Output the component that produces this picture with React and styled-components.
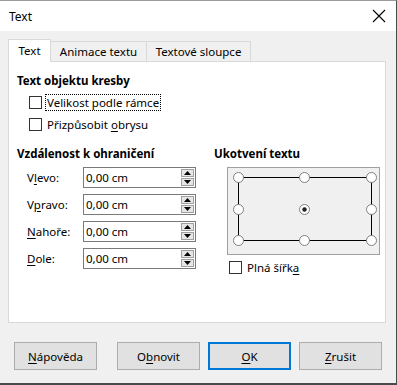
import React from "react";
import styled, { createGlobalStyle } from "styled-components";

const GlobalStyle = createGlobalStyle`
  html, body { margin: 0; padding: 0; background: #f0f0f0; }
  body { font-family: "Noto Sans", "Open Sans", sans-serif; font-size: 11.5px; color: #000; }
  * { box-sizing: border-box; }
`;

const Window = styled.div`
  width: 397px;
  height: 385px;
  display: flex;
  flex-direction: column;
  background: #f0f0f0;
  border-top: 1px solid #9a9a9a;
  border-right: 1px solid #4a4a4a;
  border-bottom: 2px solid #4a4a4a;
`;

const TitleBar = styled.div`
  height: 30px;
  background: #fff;
  display: flex;
  align-items: center;
  justify-content: space-between;
  padding: 0 10px 0 9px;
  font-size: 12px;
`;

const Body = styled.div`
  flex: 1;
  display: flex;
  flex-direction: column;
  padding: 8px 10px 0 8px;
`;

const TabRow = styled.div`
  display: flex;
  align-items: flex-end;
  height: 23px;
  position: relative;
  z-index: 1;
  margin-bottom: -1px;
`;

const Tab = styled.div`
  width: ${p => p.$w}px;
  height: ${p => (p.$active ? 23 : 21)}px;
  display: flex;
  align-items: center;
  justify-content: center;
  background: ${p => (p.$active ? "#fff" : "#f0f0f0")};
  border: 1px solid #d9d9d9;
  border-bottom: ${p => (p.$active ? "none" : "1px solid #d9d9d9")};
  margin-left: ${p => (p.$active ? 0 : -1)}px;
  padding-bottom: ${p => (p.$active ? 2 : 0)}px;
  &:first-child { margin-left: 0; }
`;

const Panel = styled.div`
  height: 262px;
  background: #fff;
  border: 1px solid #d9d9d9;
  padding: 11px 4px 0 8px;
`;

const Heading = styled.div`
  font-weight: bold;
  height: 16px;
  line-height: 16px;
`;

const CheckGroup = styled.div`
  display: flex;
  flex-direction: column;
  gap: 9px;
  padding: 7px 0 0 12px;
`;

const CheckRow = styled.label`
  display: flex;
  align-items: center;
  gap: 3px;
  height: 13px;
`;

const Box = styled.span`
  width: 13px;
  height: 13px;
  border: 1px solid #333;
  background: #fff;
  flex: none;
`;

const CheckLabel = styled.span`
  padding: 0 1px;
  line-height: 15px;
  border: 1px dotted ${p => (p.$focus ? "#000" : "transparent")};
`;

const Columns = styled.div`
  display: flex;
  margin-top: 15px;
`;

const LeftCol = styled.div`
  flex: none;
  width: 197px;
  display: flex;
  flex-direction: column;
`;

const RightCol = styled.div`
  flex: 1;
  display: flex;
  flex-direction: column;
`;

const FieldList = styled.div`
  display: flex;
  flex-direction: column;
  gap: 6px;
  padding: 5px 0 0 10px;
`;

const FieldRow = styled.div`
  display: flex;
  align-items: center;
  height: 21px;
`;

const FieldLabel = styled.span`
  width: 56px;
`;

const Input = styled.div`
  width: 113px;
  height: 21px;
  border: 1px solid #7a7a7a;
  background: #fff;
  display: flex;
  align-items: center;
  justify-content: space-between;
  padding: 0 1px 0 2px;
`;

const Spin = styled.div`
  display: flex;
  flex-direction: column;
  gap: 1px;
`;

const SpinBtn = styled.div`
  width: 13px;
  height: 8px;
  border: 1px solid #a0a0a0;
  background: #e6e6e6;
  display: flex;
  align-items: center;
  justify-content: center;
`;

const AnchorBox = styled.div`
  margin: 5px 0 0 13px;
  width: 153px;
  height: 88px;
  border: 1px solid #a0a0a0;
  background: #f0f0f0;
`;

const FullWidth = styled(CheckRow)`
  margin: 6px 0 0 15px;
`;

const Footer = styled.div`
  display: flex;
  align-items: center;
  padding: 19px 0 0 6px;
`;

const Button = styled.div`
  width: 83px;
  height: 28px;
  display: flex;
  align-items: center;
  justify-content: center;
  background: #e1e1e1;
  border: ${p => (p.$default ? "2px solid #0078d7" : "1px solid #adadad")};
  margin-left: ${p => p.$ml || 0}px;
`;

const U = styled.span`
  text-decoration: underline;
  text-underline-offset: 2px;
`;

const Up = () => (
  <svg width="7" height="4" viewBox="0 0 7 4"><path d="M0 4 L3.5 0 L7 4 Z" fill="#000" /></svg>
);
const Down = () => (
  <svg width="7" height="4" viewBox="0 0 7 4"><path d="M0 0 L3.5 4 L7 0 Z" fill="#000" /></svg>
);

const SpinField = ({ label }) => (
  <FieldRow>
    <FieldLabel>{label}</FieldLabel>
    <Input>
      <span>0,00 cm</span>
      <Spin>
        <SpinBtn><Up /></SpinBtn>
        <SpinBtn><Down /></SpinBtn>
      </Spin>
    </Input>
  </FieldRow>
);

const Radio = ({ cx, cy, on }) => (
  <g>
    <circle cx={cx} cy={cy} r="5" fill="#fff" stroke="#7f7f7f" strokeWidth="1" />
    {on && <circle cx={cx} cy={cy} r="2.2" fill="#222" />}
  </g>
);

const Anchor = () => {
  const xs = [10, 76, 143];
  const ys = [9, 41, 72];
  return (
    <svg width="151" height="86" viewBox="0 0 151 86">
      <rect x="10.5" y="9.5" width="133" height="63" fill="none" stroke="#000" strokeWidth="1" />
      {ys.map((y, j) =>
        xs.map((x, i) => (
          <Radio key={i + "-" + j} cx={x + 0.5} cy={y + 0.5} on={j === 1 && i === 1} />
        ))
      )}
    </svg>
  );
};

export default function App() {
  return (
    <>
      <GlobalStyle />
      <Window>
        <TitleBar>
          <span>Text</span>
          <svg width="14" height="14" viewBox="0 0 14 14">
            <path d="M1 1 L13 13 M13 1 L1 13" stroke="#000" strokeWidth="1.1" />
          </svg>
        </TitleBar>
        <Body>
          <TabRow>
            <Tab $w={43} $active>Text</Tab>
            <Tab $w={97}>Animace textu</Tab>
            <Tab $w={105}>Textové sloupce</Tab>
          </TabRow>
          <Panel>
            <Heading>Text objektu kresby</Heading>
            <CheckGroup>
              <CheckRow>
                <Box />
                <CheckLabel $focus>Velikost podle rámce</CheckLabel>
              </CheckRow>
              <CheckRow>
                <Box />
                <CheckLabel>Přizpůsobit <U>o</U>brysu</CheckLabel>
              </CheckRow>
            </CheckGroup>
            <Columns>
              <LeftCol>
                <Heading>Vzdálenost k ohraničení</Heading>
                <FieldList>
                  <SpinField label={<>V<U>l</U>evo:</>} />
                  <SpinField label={<>V<U>p</U>ravo:</>} />
                  <SpinField label={<><U>N</U>ahoře:</>} />
                  <SpinField label={<><U>D</U>ole:</>} />
                </FieldList>
              </LeftCol>
              <RightCol>
                <Heading>Ukotvení textu</Heading>
                <AnchorBox>
                  <Anchor />
                </AnchorBox>
                <FullWidth>
                  <Box />
                  <CheckLabel>Plná šířk<U>a</U></CheckLabel>
                </FullWidth>
              </RightCol>
            </Columns>
          </Panel>
          <Footer>
            <Button><span><U>N</U>ápověda</span></Button>
            <Button $ml={20}><span>O<U>b</U>novit</span></Button>
            <Button $ml={8} $default><span><U>O</U>K</span></Button>
            <Button $ml={8}><span><U>Z</U>rušit</span></Button>
          </Footer>
        </Body>
      </Window>
    </>
  );
}
